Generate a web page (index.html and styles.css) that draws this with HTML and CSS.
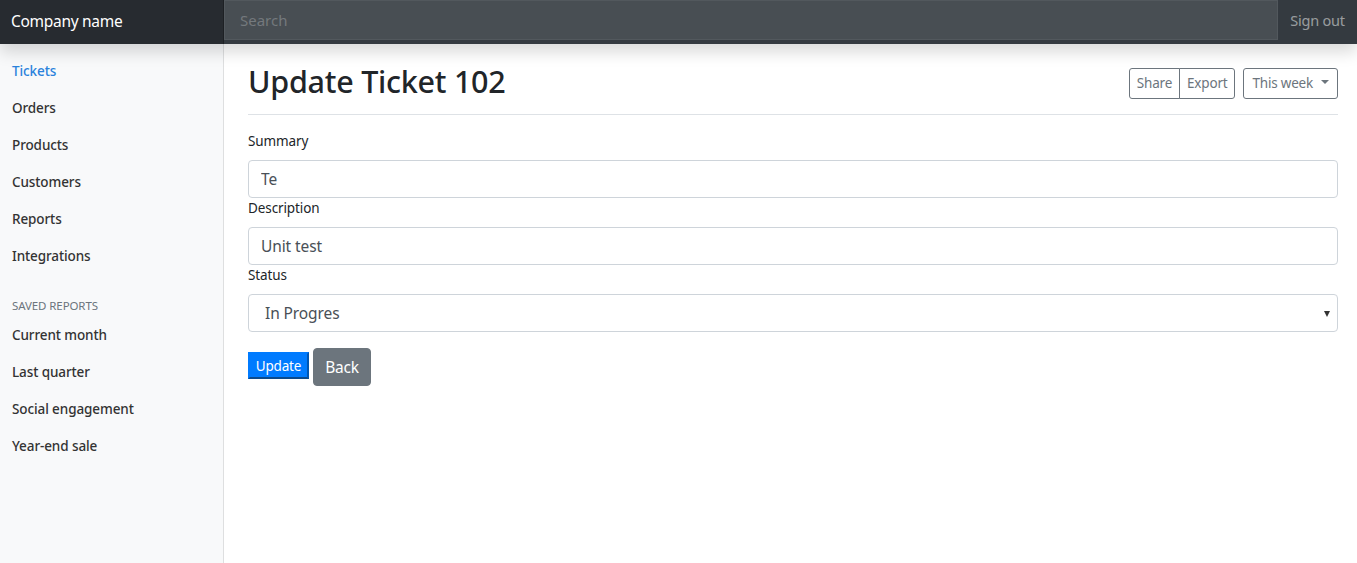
FILE: index.html
```html
<!DOCTYPE html>
<html lang="en">
<head>
<meta charset="utf-8">
<title>Update Ticket</title>
<link rel="stylesheet" href="styles.css">
</head>
<body>
<nav class="topbar">
  <a class="brand" href="#">Company name</a>
  <input class="search" type="text" placeholder="Search" aria-label="Search">
  <a class="signout" href="#">Sign out</a>
</nav>
<div class="layout">
  <aside class="sidebar">
    <ul class="nav">
      <li><a class="nav-link active" href="#">Tickets</a></li>
      <li><a class="nav-link" href="#">Orders</a></li>
      <li><a class="nav-link" href="#">Products</a></li>
      <li><a class="nav-link" href="#">Customers</a></li>
      <li><a class="nav-link" href="#">Reports</a></li>
      <li><a class="nav-link" href="#">Integrations</a></li>
    </ul>
    <h6 class="sidebar-heading">Saved reports</h6>
    <ul class="nav">
      <li><a class="nav-link" href="#">Current month</a></li>
      <li><a class="nav-link" href="#">Last quarter</a></li>
      <li><a class="nav-link" href="#">Social engagement</a></li>
      <li><a class="nav-link" href="#">Year-end sale</a></li>
    </ul>
  </aside>
  <main class="main">
    <div class="page-header">
      <h1 class="title">Update Ticket 102</h1>
      <div class="toolbar">
        <div class="btn-group">
          <button class="btn-outline">Share</button>
          <button class="btn-outline">Export</button>
        </div>
        <button class="btn-outline dropdown">This week <span class="caret"></span></button>
      </div>
    </div>
    <form class="form">
      <label class="label" for="summary">Summary</label>
      <input class="control" id="summary" type="text" value="Te">
      <label class="label" for="desc">Description</label>
      <input class="control" id="desc" type="text" value="Unit test">
      <label class="label" for="status">Status</label>
      <div class="select-wrap">
        <select class="control select" id="status">
          <option>In Progres</option>
          <option>Open</option>
          <option>Closed</option>
        </select>
      </div>
      <div class="actions">
        <button class="btn-update" type="button">Update</button>
        <button class="btn-back" type="button">Back</button>
      </div>
    </form>
  </main>
</div>
</body>
</html>
```
FILE: styles.css
```css
* { box-sizing: border-box; }
html, body { margin: 0; height: 100%; }
body {
  font-family: "Noto Sans", "Open Sans", "Liberation Sans", sans-serif;
  font-size: 16px;
  color: #212529;
  background: #fff;
  display: flex;
  flex-direction: column;
  height: 563px;
  overflow: hidden;
}
.topbar {
  display: flex;
  align-items: flex-start;
  height: 44px;
  background: #343a40;
  box-shadow: 0 8px 16px rgba(0,0,0,.15);
  position: relative;
  z-index: 2;
  flex: none;
}
.brand {
  width: 224px;
  height: 44px;
  flex: none;
  display: flex;
  align-items: center;
  padding-left: 11px;
  padding-bottom: 2px;
  background: rgba(0,0,0,.25);
  box-shadow: inset -1px 0 0 rgba(0,0,0,.25);
  color: #fff;
  text-decoration: none;
  font-size: 15.5px;
  letter-spacing: -0.3px;
}
.search {
  flex: 1;
  height: 40px;
  margin-top: 0;
  border: 1px solid rgba(255,255,255,.06);
  border-radius: 0;
  background: rgba(255,255,255,.1);
  color: #fff;
  padding: 0 15px;
  font: inherit;
  font-size: 15px;
  outline: none;
}
.search::placeholder { color: rgba(255,255,255,.25); }
.signout {
  width: 79px;
  flex: none;
  height: 44px;
  display: flex;
  align-items: center;
  justify-content: center;
  color: rgba(255,255,255,.5);
  text-decoration: none;
  font-size: 14.5px;
  letter-spacing: -0.2px;
  padding-bottom: 4px;
}
.layout {
  flex: 1;
  display: flex;
  min-height: 0;
}
.sidebar {
  width: 224px;
  flex: none;
  background: #f8f9fa;
  box-shadow: inset -1px 0 0 rgba(0,0,0,.1);
  padding-top: 9px;
}
.nav { list-style: none; margin: 0; padding: 0; }
.nav-link {
  display: block;
  padding: 8px 12px;
  line-height: 21px;
  font-size: 13.5px;
  font-weight: 500;
  color: #333;
  text-decoration: none;
  letter-spacing: -0.1px;
}
.nav-link.active { color: #2a82dc; }
.sidebar-heading {
  margin: 22px 0 2px;
  padding: 0 12px;
  font-size: 11.5px;
  font-weight: 400;
  line-height: 18px;
  text-transform: uppercase;
  color: #6c757d;
  letter-spacing: -0.1px;
}
.main {
  flex: 1;
  padding: 16px 19px 0 24px;
}
.page-header {
  display: flex;
  justify-content: space-between;
  align-items: center;
  padding-bottom: 8px;
  border-bottom: 1px solid #dee2e6;
  margin-bottom: 16px;
}
.title {
  margin: 0 0 6px;
  padding-top: 2px;
  font-size: 30.5px;
  font-weight: 500;
  line-height: 38px;
  letter-spacing: -0.25px;
}
.toolbar { display: flex; gap: 8px; margin-top: 1px; }
.btn-group { display: flex; }
.btn-outline {
  font: inherit;
  font-size: 13.5px;
  line-height: 21px;
  height: 31px;
  padding: 4px 7px;
  background: #fff;
  color: #6c757d;
  border: 1px solid #6c757d;
  border-radius: 3px;
  letter-spacing: -0.2px;
}
.btn-group .btn-outline:first-child { border-top-right-radius: 0; border-bottom-right-radius: 0; }
.btn-group .btn-outline:last-child { border-top-left-radius: 0; border-bottom-left-radius: 0; margin-left: -1px; }
.dropdown { display: flex; align-items: center; gap: 8px; padding: 4px 8px; }
.caret {
  width: 0; height: 0;
  border-left: 4px solid transparent;
  border-right: 4px solid transparent;
  border-top: 4px solid #6c757d;
  margin-top: -3px;
}
.form { display: flex; flex-direction: column; }
.label {
  display: block;
  font-size: 13.5px;
  line-height: 21px;
  margin-bottom: 8px;
  letter-spacing: -0.1px;
}
.control {
  display: block;
  width: 100%;
  height: 38px;
  padding: 6px 12px;
  font: inherit;
  font-size: 15.5px;
  color: #495057;
  background: #fff;
  border: 1px solid #ced4da;
  border-radius: 4px;
  letter-spacing: -0.1px;
}
.select-wrap { position: relative; }
.select {
  appearance: none;
  -webkit-appearance: none;
  padding-left: 16px;
}
.select-wrap::after {
  content: "";
  position: absolute;
  right: 8px;
  top: 17px;
  border-left: 3.5px solid transparent;
  border-right: 3.5px solid transparent;
  border-top: 6px solid #333;
  pointer-events: none;
}
.actions {
  display: flex;
  align-items: flex-start;
  gap: 4px;
  margin-top: 16px;
}
.btn-update {
  font: inherit;
  font-size: 13.5px;
  height: 27px;
  width: 61px;
  margin-top: 4px;
  padding: 0;
  color: #fff;
  background: #007bff;
  border: 2px solid #007bff;
  border-right-color: #0056b3;
  border-bottom-color: #0b4a8c;
  border-radius: 0;
  letter-spacing: -0.2px;
}
.btn-back {
  font: inherit;
  font-size: 15.5px;
  height: 38px;
  width: 58px;
  padding: 0;
  color: #fff;
  background: #6c757d;
  border: 1px solid #6c757d;
  border-radius: 4px;
  letter-spacing: -0.2px;
}
```
